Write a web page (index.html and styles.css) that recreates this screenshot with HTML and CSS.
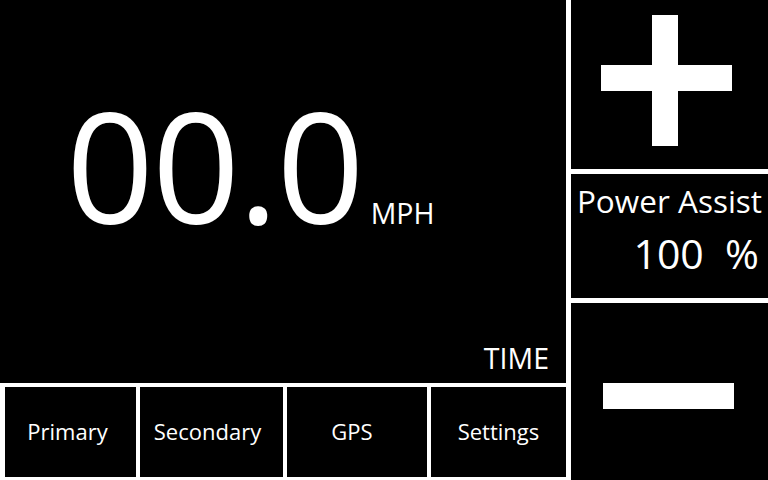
FILE: index.html
```html
<!DOCTYPE html>
<html lang="en">
<head>
<meta charset="utf-8">
<title>Dashboard</title>
<link rel="stylesheet" href="styles.css">
</head>
<body>
<div class="app">
  <div class="left">
    <div class="speed-area">
      <div class="speed-line">
        <span class="speed">00.0</span>
        <span class="unit">MPH</span>
      </div>
      <div class="time">TIME</div>
    </div>
    <div class="tabs">
      <div class="tab tab-primary">Primary</div>
      <div class="tab tab-secondary">Secondary</div>
      <div class="tab tab-gps">GPS</div>
      <div class="tab tab-settings">Settings</div>
    </div>
  </div>
  <div class="right">
    <div class="btn btn-plus">
      <svg class="plus-icon" width="131" height="131" viewBox="0 0 131 131">
        <rect x="51" y="0" width="26" height="131" fill="#fff"/>
        <rect x="0" y="50" width="131" height="26" fill="#fff"/>
      </svg>
    </div>
    <div class="assist">
      <div class="assist-label">Power Assist</div>
      <div class="assist-value">100&nbsp;&nbsp;%</div>
    </div>
    <div class="btn btn-minus">
      <div class="minus-icon"></div>
    </div>
  </div>
</div>
</body>
</html>
```

FILE: styles.css
```css
html, body {
  margin: 0;
  padding: 0;
  background: #000;
  width: 768px;
  height: 480px;
  overflow: hidden;
}

body {
  font-family: "Open Sans", "Noto Sans", "DejaVu Sans", sans-serif;
  color: #fff;
}

.app {
  display: grid;
  grid-template-columns: 566px 197px;
  column-gap: 5px;
  width: 768px;
  height: 480px;
  background: #fff;
}

.left {
  display: flex;
  flex-direction: column;
  row-gap: 4px;
  background: #fff;
  height: 480px;
}

.speed-area {
  background: #000;
  height: 383px;
  display: flex;
  flex-direction: column;
  box-sizing: border-box;
  padding: 87px 17px 11px 66px;
}

.speed-line {
  display: flex;
  align-items: baseline;
  column-gap: 8px;
  line-height: 1;
}

.speed {
  font-size: 154px;
  line-height: 1;
  letter-spacing: -2px;
}

.unit {
  font-size: 28.5px;
  line-height: 1;
}

.time {
  margin-top: auto;
  align-self: flex-end;
  font-size: 28.5px;
  line-height: 1;
}

.tabs {
  display: grid;
  grid-template-columns: 131px 143px 140px 135px;
  column-gap: 4px;
  padding-left: 5px;
  height: 90px;
}

.tab {
  background: #000;
  display: flex;
  align-items: center;
  justify-content: center;
  font-size: 22px;
  line-height: 1;
  padding-bottom: 3px;
  box-sizing: border-box;
}

.tab-primary { padding-right: 6px; }
.tab-secondary { padding-right: 8px; }
.tab-gps { padding-right: 10px; }

.right {
  display: flex;
  flex-direction: column;
  row-gap: 5px;
  height: 480px;
}

.btn {
  background: #000;
  box-sizing: border-box;
}

.btn-plus {
  height: 169px;
  padding: 15px 0 0 30px;
}

.plus-icon {
  display: block;
}

.assist {
  background: #000;
  height: 124px;
  box-sizing: border-box;
  padding-top: 11px;
  display: flex;
  flex-direction: column;
}

.assist-label {
  font-size: 31.5px;
  line-height: 1;
  text-align: center;
}

.assist-value {
  font-size: 41px;
  line-height: 1;
  text-align: right;
  padding-right: 9px;
  margin-top: 16px;
}

.btn-minus {
  flex: 1;
  padding: 80px 0 0 32px;
}

.minus-icon {
  width: 131px;
  height: 26px;
  background: #fff;
}
```
